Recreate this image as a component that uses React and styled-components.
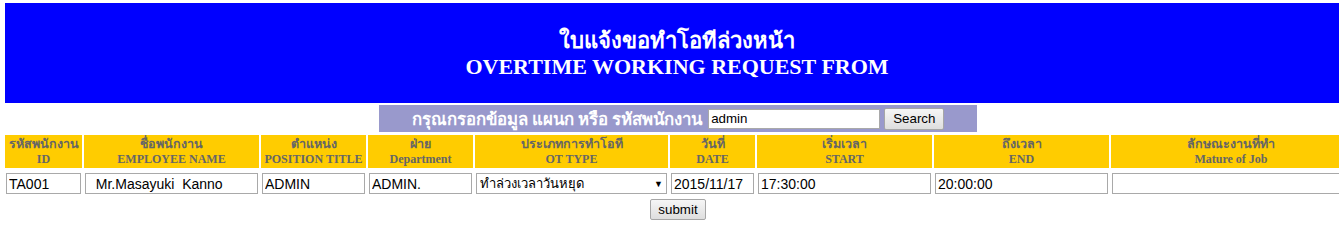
import React from 'react';
import styled, { createGlobalStyle } from 'styled-components';

const GlobalStyle = createGlobalStyle`
  html, body {
    margin: 0;
    padding: 0;
    background: #ffffff;
    overflow: hidden;
  }
  body {
    padding: 3px 0 0 5px;
    font-family: "Liberation Serif", "Times New Roman", serif;
  }
`;

const Page = styled.div`
  width: 1400px;
`;

const Banner = styled.div`
  background: #0000ff;
  height: 100px;
  width: 1344px;
  padding-top: 2px;
  box-sizing: border-box;
  display: flex;
  flex-direction: column;
  align-items: center;
  justify-content: center;
  color: #ffffff;
  font-weight: bold;
  font-size: 22px;
  line-height: 26px;
`;

const SearchBar = styled.form`
  margin: 2px 0 0 374px;
  width: 598px;
  height: 27px;
  background: #9999cc;
  display: flex;
  align-items: center;
  justify-content: center;
  gap: 4px;
`;

const SearchLabel = styled.span`
  color: #ffffff;
  font-weight: bold;
  font-size: 16.8px;
  margin-right: 2px;
`;

const SearchInput = styled.input`
  width: 172px;
  height: 20px;
  box-sizing: border-box;
  border: 1px solid #a9a9a9;
  padding: 1px 2px;
  font-family: "Liberation Sans", Arial, sans-serif;
  font-size: 13.33px;
`;

const Button = styled.button`
  font-family: "Liberation Sans", Arial, sans-serif;
  font-size: 13.33px;
  height: ${p => p.$h || 21}px;
  padding: 0 ${p => p.$px || 7}px;
  border: 1px solid #a6a6a6;
  border-radius: 2px;
  background: linear-gradient(#f6f6f6, #dedede);
  color: #000;
`;

const Grid = styled.div`
  display: grid;
  grid-template-columns: 77px 175px 105px 105px 193px 85px 175px 175px 240px;
  column-gap: 2px;
`;

const HeadRow = styled(Grid)`
  margin-top: 3px;
`;

const HeadCell = styled.div`
  background: #ffcc00;
  height: 33px;
  display: flex;
  flex-direction: column;
  align-items: center;
  justify-content: center;
  color: #666666;
  font-weight: bold;
  font-size: 12px;
  line-height: 15px;
  text-align: center;
`;

const ThaiLine = styled.span`
  font-size: 12.5px;
`;

const InputRow = styled(Grid)`
  margin-top: 5px;
  align-items: center;
`;

const Field = styled.input`
  box-sizing: border-box;
  width: calc(100% - 2px);
  margin-left: 1px;
  height: 21px;
  border: 1px solid #a9a9a9;
  padding: 1px 2px;
  font-family: "Liberation Sans", Arial, sans-serif;
  font-size: 14px;
  color: #000;
`;

const SelectBox = styled.div`
  box-sizing: border-box;
  width: calc(100% - 2px);
  margin-left: 1px;
  height: 21px;
  border: 1px solid #a9a9a9;
  display: flex;
  align-items: center;
  justify-content: space-between;
  padding: 0 3px 0 3px;
  font-family: "Liberation Sans", Arial, sans-serif;
  font-size: 13px;
  background: #fff;
`;

const Caret = styled.span`
  font-size: 9px;
`;

const SubmitRow = styled.div`
  width: 1346px;
  display: flex;
  justify-content: center;
  margin-top: 5px;
`;

const columns = [
  ['รหัสพนักงาน', 'ID'],
  ['ชื่อพนักงาน', 'EMPLOYEE NAME'],
  ['ตำแหน่ง', 'POSITION TITLE'],
  ['ฝ่าย', 'Department'],
  ['ประเภทการทำโอที', 'OT TYPE'],
  ['วันที่', 'DATE'],
  ['เริ่มเวลา', 'START'],
  ['ถึงเวลา', 'END'],
  ['ลักษณะงานที่ทำ', 'Mature of Job'],
];

export default function App() {
  return (
    <Page>
      <GlobalStyle />
      <Banner>
        <div>ใบแจ้งขอทำโอทีล่วงหน้า</div>
        <div>OVERTIME WORKING REQUEST FROM</div>
      </Banner>

      <SearchBar onSubmit={e => e.preventDefault()}>
        <SearchLabel>กรุณกรอกข้อมูล แผนก หรือ รหัสพนักงาน</SearchLabel>
        <SearchInput defaultValue="admin" />
        <Button type="submit" $h={22} $px={8}>Search</Button>
      </SearchBar>

      <HeadRow>
        {columns.map(([th, en]) => (
          <HeadCell key={en}>
            <ThaiLine>{th}</ThaiLine>
            <span>{en}</span>
          </HeadCell>
        ))}
      </HeadRow>

      <InputRow>
        <Field defaultValue="TA001" />
        <Field defaultValue="  Mr.Masayuki  Kanno" />
        <Field defaultValue="ADMIN" />
        <Field defaultValue="ADMIN." />
        <SelectBox>
          <span>ทำล่วงเวลาวันหยุด</span>
          <Caret>▼</Caret>
        </SelectBox>
        <Field defaultValue="2015/11/17" />
        <Field defaultValue="17:30:00" />
        <Field defaultValue="20:00:00" />
        <Field defaultValue="" />
      </InputRow>

      <SubmitRow>
        <Button type="button">submit</Button>
      </SubmitRow>
    </Page>
  );
}
